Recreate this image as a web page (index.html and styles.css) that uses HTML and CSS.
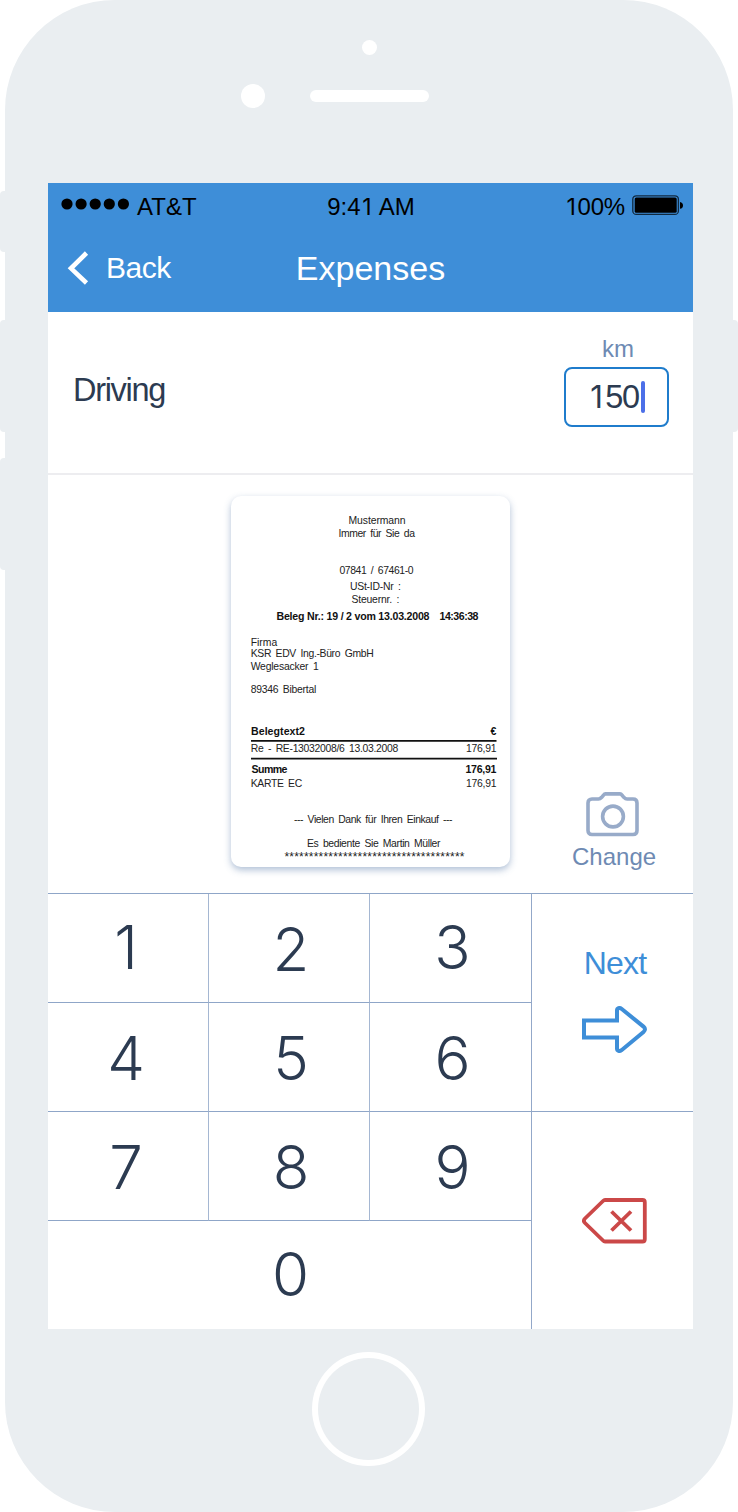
FILE: index.html
```html
<!DOCTYPE html>
<html lang="en">
<head>
<meta charset="utf-8">
<title>Expenses</title>
<link rel="stylesheet" href="styles.css">
</head>
<body>
<div class="device">
  <span class="side mute"></span>
  <span class="side vol-up"></span>
  <span class="side vol-down"></span>
  <span class="side power"></span>
  <div class="phone">
    <div class="camera"></div>
    <div class="earpiece"><span class="sensor"></span><span class="speaker"></span></div>
    <main class="screen">
      <header class="header">
        <div class="status">
          <div class="carrier">
            <svg width="69" height="12" viewBox="0 0 69 12"><circle cx="6" cy="6" r="5.6"/><circle cx="20.1" cy="6" r="5.6"/><circle cx="34.2" cy="6" r="5.6"/><circle cx="48.3" cy="6" r="5.6"/><circle cx="62.4" cy="6" r="5.6"/></svg>
            <span>AT&amp;T</span>
          </div>
          <div class="clock">9:4<span class="one">1</span> AM</div>
          <div class="power-level">
            <span><span class="one">1</span>00%</span>
            <svg width="52" height="21" viewBox="0 0 52 21"><rect x=".8" y=".8" width="45.6" height="18.6" rx="3.5" fill="none" stroke="#10293f" stroke-width="1.3"/><rect x="2.7" y="2.5" width="42" height="15.3" rx="1.5"/><path d="M48 7c2 .4 3 1.600 3 3.400s-1 3-3 3.400z"/></svg>
          </div>
        </div>
        <nav class="nav">
          <a class="back"><svg width="22" height="34" viewBox="0 0 22 34"><path d="M19.500 2 4 17.300 19.500 32" fill="none" stroke="#fff" stroke-width="4.600"/></svg><span>Back</span></a>
          <h1 class="title">Expenses</h1>
        </nav>
      </header>
      <section class="entry">
        <div class="entry-name">Driving</div>
        <div class="amount">
          <label class="unit">km</label>
          <div class="field"><span class="value"><span class="one">1</span>50</span><span class="caret"></span></div>
        </div>
      </section>
      <section class="photo">
        <svg class="receipt" width="279" height="371" viewBox="231 496 279 371">
          <g text-anchor="middle">
            <text x="377" y="524.300" textLength="57">Mustermann</text>
            <text x="376.700" y="536.800" textLength="76.500">Immer für Sie da</text>
            <text x="376.500" y="573.800" textLength="74">07841 / 67461-0</text>
            <text x="375.500" y="589.500" textLength="51">USt-ID-Nr :</text>
            <text x="375.500" y="602.500" textLength="48">Steuernr. :</text>
          </g>
          <text class="b" x="276.500" y="619.500" textLength="153">Beleg Nr.: 19 / 2 vom 13.03.2008</text>
          <text class="b" x="439.500" y="619.500" textLength="39">14:36:38</text>
          <text x="250.700" y="645.800" textLength="26.500">Firma</text>
          <text x="250.700" y="657.300" textLength="123">KSR EDV Ing.-Büro GmbH</text>
          <text x="250.700" y="669.800" textLength="68">Weglesacker 1</text>
          <text x="250.700" y="692.800" textLength="65.500">89346 Bibertal</text>
          <text class="b" x="251" y="734.500" textLength="54">Belegtext2</text>
          <text class="b" x="490.500" y="734.500">€</text>
          <path d="M251 740.800h245.500M251 758.600h246" stroke="#111" stroke-width="1.800"/>
          <text x="250.700" y="751.800" textLength="147.500">Re - RE-13032008/6 13.03.2008</text>
          <text x="466" y="751.800" textLength="30.500">176,91</text>
          <text class="b" x="251.500" y="772.700" textLength="36">Summe</text>
          <text class="b" x="465.500" y="772.700" textLength="31">176,91</text>
          <text x="250.700" y="786.500" textLength="51.500">KARTE EC</text>
          <text x="466" y="786.500" textLength="30.500">176,91</text>
          <text x="294" y="822.800" textLength="158.500">--- Vielen Dank für Ihren Einkauf ---</text>
          <text x="307" y="846.800" textLength="133.500">Es bediente Sie Martin Müller</text>
          <text class="stars" x="284.500" y="861" textLength="180">*************************************</text>
        </svg>
        <div class="change">
          <svg width="54" height="46" viewBox="0 0 54 46" fill="none" stroke="#98abc9" stroke-width="3.600"><path d="M6 7h6.500c1.500 0 2.200-.6 3.200-1.700l1.600-2c.7-.9 1.200-1.400 2.200-1.400h14.500c1 0 1.500.5 2.200 1.400l1.600 2C38.900 6.400 39.600 7 41.100 7H47c2.500 0 4 1.500 4 4v27.500c0 2.500-1.500 4-4 4H6c-2.500 0-4-1.500-4-4V11c0-2.500 1.500-4 4-4z"/><circle cx="27" cy="24.500" r="10.400"/></svg>
          <span>Change</span>
        </div>
      </section>
      <section class="keypad">
        <div class="digits">
          <span class="key first">1</span><span class="key">2</span><span class="key first">3</span>
          <span class="key">4</span><span class="key">5</span><span class="key">6</span>
          <span class="key">7</span><span class="key">8</span><span class="key">9</span>
          <span class="key zero">0</span>
        </div>
        <div class="actions">
          <div class="next"><span>Next</span>
            <svg width="66" height="48" viewBox="0 0 66 48"><path d="M2 14.500H35V4.500C35 2 37.500 1.300 39.500 2.800L61.500 20.600Q64.500 23.300 61.500 26L39.500 44.200C37.500 45.700 35 45 35 42.500V31.500H2z" fill="none" stroke="#3e8ed8" stroke-width="4"/></svg>
          </div>
          <div class="erase">
            <svg width="66" height="46" viewBox="0 0 66 46" fill="none" stroke="#cb4848" stroke-width="3.800"><path d="M23 2H60.500Q62.800 2 62.800 4.300V41.200Q62.800 43.500 60.500 43.500H23Q22 43.500 21 42.500L3 25Q.8 22.800 3 20.500L21 3Q22 2 23 2z"/><path d="M29.500 13.500 49 32.500M49 13.500 29.500 32.500"/></svg>
          </div>
        </div>
      </section>
    </main>
    <div class="home"></div>
  </div>
</div>
</body>
</html>
```
FILE: styles.css
```css
* { box-sizing: border-box; }
body { margin: 0; background: #fff; font-family: "Liberation Sans", Arial, sans-serif; color: #2c3b51; }
svg { display: block; flex: none; }
.device { position: relative; width: 738px; height: 1512px; padding: 0 5px 0 4.500px; overflow: hidden; }
.side { position: absolute; left: 0; width: 12px; background: #eaeef1; border-radius: 4px; }
.mute { top: 191px; height: 61px; }
.vol-up { top: 320px; height: 112px; }
.vol-down { top: 458px; height: 112px; }
.power { top: 320px; height: 112px; left: auto; right: 0; }
.phone { position: relative; height: 1512px; background: #eaeef1; border-radius: 110px; padding: 40px 0 0 43.500px; }
.camera { width: 15px; height: 15px; border-radius: 50%; background: #fff; margin-left: 314px; }
.earpiece { display: flex; align-items: center; height: 25px; margin: 28px 0 75px 192.500px; gap: 45.500px; }
.sensor { width: 24px; height: 24px; border-radius: 50%; background: #fff; }
.speaker { width: 119px; height: 12px; border-radius: 6px; background: #fff; }
.screen { width: 645px; height: 1146px; background: #fff; }
.header { height: 129px; background: #3e8ed8; padding-top: 10px; }
.status { display: grid; grid-template-columns: 1fr auto 1fr; height: 28px; font-size: 24px; line-height: 28px; color: #000; }
.carrier { display: flex; padding-left: 13px; gap: 7px; }
.carrier svg { margin-top: 5px; }
.power-level { display: flex; justify-content: flex-end; gap: 7px; padding-right: 9px; letter-spacing: -.2px; }
.power-level svg { margin-top: 2px; }
.one { display: inline-block; width: .556em; text-align: center; font-family: Inter, sans-serif; font-size: .96em; line-height: 1; letter-spacing: 0; }
.clock { padding-left: 1px; }
.nav { display: grid; grid-template-columns: 1fr auto 1fr; padding-top: 27px; color: #fff; line-height: 40px; }
.back { display: flex; gap: 17px; padding-left: 19px; font-size: 30px; letter-spacing: -.5px; }
.back svg { margin-top: 3px; }
.title { margin: 0; font-size: 34px; font-weight: 400; }
.entry { height: 163px; display: flex; justify-content: space-between; padding: 23px 24px 0 25px; border-bottom: 2px solid #ededf0; }
.entry-name { margin-top: 35px; font-size: 32.500px; line-height: 40px; letter-spacing: -1.300px; }
.amount { display: flex; flex-direction: column; align-items: center; gap: 4px; }
.unit { font-size: 24px; line-height: 28px; color: #6e8ab3; padding-left: 3px; }
.field { width: 105px; height: 60px; border: 2px solid #1f7ccc; border-radius: 8px; display: flex; align-items: center; padding-left: 22px; }
.value { font-size: 32.500px; letter-spacing: -1.300px; line-height: 40px; }
.caret { width: 4px; height: 32px; border-radius: 2px; background: #4c6fe8; margin-left: 2px; }
.photo { height: 418px; display: flex; padding: 21px 0 0 183px; }
.receipt { border-radius: 10px; box-shadow: 0 3px 7px rgba(80, 115, 165, .45); font-size: 10.400px; fill: #222; }
.receipt text { white-space: pre; word-spacing: 2px; }
.receipt .b { font-weight: 700; font-size: 10.600px; fill: #111; word-spacing: 0; }
.receipt .stars { font-size: 12px; }
.change { display: flex; flex-direction: column; align-items: center; margin: 296px 0 0 62px; gap: 5px; font-size: 24px; line-height: 28px; color: #6e8ab3; }
.change svg { margin-right: 3px; }
.keypad { height: 436px; display: flex; border-top: 1px solid #8fa6c8; }
.digits { display: grid; grid-template-columns: 161px 161px 161px; grid-template-rows: repeat(4, 109px); width: 484px; border-right: 1px solid #93a8c9; }
.key { display: flex; align-items: center; justify-content: center; font: 300 60px/70px Inter, sans-serif; border-right: 1px solid #a5b7d2; border-bottom: 1px solid #8fa6c8; padding: 2px 4px 0 0; }
.key:nth-child(3n) { border-right: 0; padding: 2px 0 0 4px; }
.key:nth-child(3n+2) { padding: 1px 0 0 4px; }
.key.first { padding-top: 0; padding-bottom: 2px; }
.key.zero { grid-column: 1 / 4; border: 0; padding: 0 0 3px 2px; }
.actions { width: 161px; }
.next { height: 218px; border-bottom: 1px solid #8fa6c8; display: flex; flex-direction: column; align-items: center; padding: 49px 0 0 5px; gap: 23px; font-size: 32px; line-height: 40px; letter-spacing: -.8px; color: #3e8ed8; }
.erase { display: flex; justify-content: center; padding: 86px 0 0 5px; }
.home { width: 113px; height: 114px; border: 6px solid #fff; border-radius: 50%; margin: 23px 0 0 264px; }
```
